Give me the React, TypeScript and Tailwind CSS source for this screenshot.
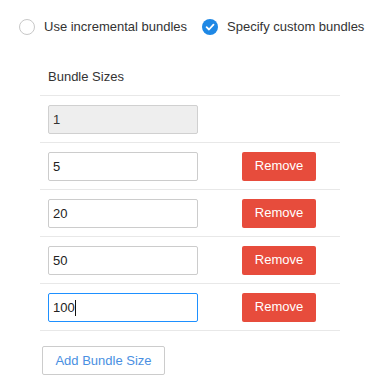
import React, { useState } from 'react';

const font = { fontFamily: '"Liberation Sans", Arial, sans-serif' };

const Radio: React.FC<{ checked?: boolean; label: string }> = ({ checked = false, label }) => (
  <label className="flex items-center gap-[9px] cursor-pointer shrink-0 whitespace-nowrap">
    {checked ? (
      <span className="w-[16px] h-[16px] shrink-0 rounded-full bg-[#1e88e5] flex items-center justify-center">
        <svg width="10" height="10" viewBox="0 0 10 10">
          <path d="M1.6 5.2 L4 7.5 L8.5 2.6" fill="none" stroke="white" strokeWidth="1.8" strokeLinecap="round" strokeLinejoin="round" />
        </svg>
      </span>
    ) : (
      <span className="w-[16px] h-[16px] shrink-0 rounded-full border border-[#c8c8c8] bg-white" />
    )}
    <span className="text-[13px] text-[#333] leading-[16px]">{label}</span>
  </label>
);

const App: React.FC = () => {
  const [sizes, setSizes] = useState<string[]>(['5', '20', '50', '100']);

  return (
    <div className="w-[376px] h-[386px] bg-white pt-[19px] pl-[19px] overflow-hidden" style={font}>
      <div className="flex items-center gap-[15px]">
        <Radio label="Use incremental bundles" />
        <Radio checked label="Specify custom bundles" />
      </div>

      <div className="ml-[21px] w-[300px] mt-[32px]">
        <div className="border-b border-[#e8e8e8] pl-[8px] pb-[8px] text-[13px] leading-[20px] text-[#333]">
          Bundle Sizes
        </div>
        <div className="h-[47px] flex items-center border-b border-[#e8e8e8] pl-[8px]">
          <input
            disabled
            value="1"
            readOnly
            className="w-[150px] h-[29px] border border-[#d0d0d0] rounded-[2px] bg-[#eeeeee] px-[4px] text-[13px] text-[#333]"
            style={font}
          />
        </div>
        {sizes.map((s, i) => {
          const last = i === sizes.length - 1;
          return (
            <div key={i} className="h-[47px] flex items-center border-b border-[#e8e8e8] pl-[8px]">
              <div className="relative">
                <input
                  value={s}
                  onChange={e => setSizes(sizes.map((v, j) => (j === i ? e.target.value : v)))}
                  className={
                    last
                      ? 'w-[150px] h-[29px] border border-[rgb(30,144,255)] rounded-[2px] bg-white px-[4px] text-[13px] text-[#222] outline-none'
                      : 'w-[150px] h-[29px] border border-[#cccccc] rounded-[2px] bg-white px-[4px] text-[13px] text-[#222] outline-none focus:border-[rgb(30,144,255)]'
                  }
                  style={font}
                />
                {last && <span className="absolute left-[27px] top-[7px] w-[1px] h-[16px] bg-[#111] pointer-events-none" />}
              </div>
              <button
                onClick={() => setSizes(sizes.filter((_, j) => j !== i))}
                className="ml-[44px] w-[74px] h-[29px] rounded-[2px] bg-[#e74c3c] text-white text-[13px]"
                style={font}
              >
                Remove
              </button>
            </div>
          );
        })}
        <button
          onClick={() => setSizes([...sizes, ''])}
          className="mt-[15px] ml-[2px] w-[123px] h-[29px] border border-[#cccccc] rounded-[2px] bg-white text-[13px] text-[#4a90e2]"
          style={font}
        >
          Add Bundle Size
        </button>
      </div>
    </div>
  );
};

export default App;
